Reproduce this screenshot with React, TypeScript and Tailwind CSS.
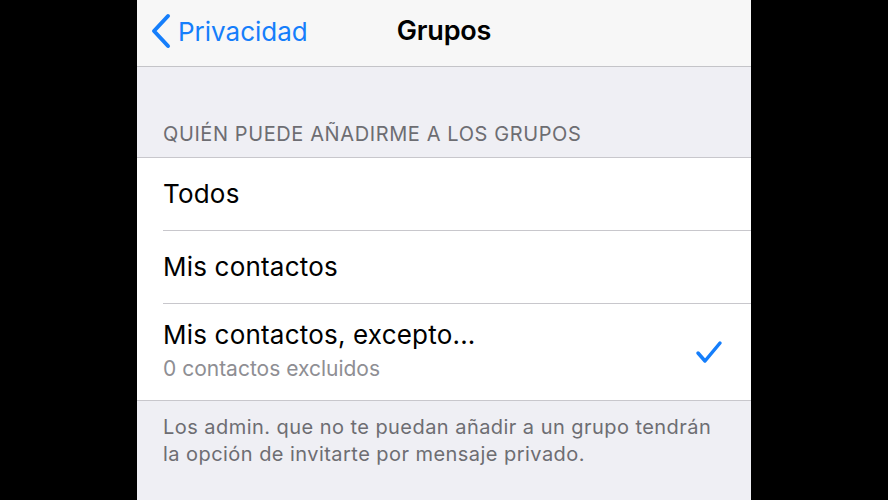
import React from "react";

export default function App() {
  const font = { fontFamily: "Inter, 'Noto Sans', sans-serif" };
  return (
    <div className="w-[888px] h-[500px] bg-black flex justify-center overflow-hidden" style={font}>
      <div className="w-[614px] h-[500px] bg-[#efeff4] flex flex-col">
        <div className="h-[67px] bg-[#f7f7f7] border-b border-[#c4c4c8] relative flex items-center justify-center pb-[4px] shrink-0">
          <div className="absolute left-[12px] top-0 bottom-[4px] flex items-center gap-[5px] text-[#157efb]">
            <svg width="24" height="36" viewBox="0 0 24 36" fill="none">
              <path d="M19 3 L5 18 L19 33" stroke="#157efb" strokeWidth="4" strokeLinecap="round" strokeLinejoin="round" />
            </svg>
            <span className="text-[26px]">Privacidad</span>
          </div>
          <span className="text-[27px] font-semibold text-black tracking-[-0.2px]">Grupos</span>
        </div>
        <div className="h-[90px] flex items-end pl-[26px] pb-[8px] shrink-0">
          <span className="text-[20px] text-[#6d6d72] tracking-[0.6px]">QUIÉN PUEDE AÑADIRME A LOS GRUPOS</span>
        </div>
        <div className="bg-white border-y border-[#c8c7cc]">
          <div className="h-[72px] flex items-center pl-[26px]">
            <span className="text-[26px] text-black tracking-[0.2px] -mt-[2px]">Todos</span>
          </div>
          <div className="ml-[26px] h-px bg-[#c8c7cc]" />
          <div className="h-[72px] flex items-center pl-[26px]">
            <span className="text-[26px] text-black tracking-[0.2px] -mt-[2px]">Mis contactos</span>
          </div>
          <div className="ml-[26px] h-px bg-[#c8c7cc]" />
          <div className="h-[96px] flex items-center pl-[26px] pr-[28px]">
            <div className="flex-1 flex flex-col gap-[6px] -mt-[3px]">
              <span className="text-[26px] text-black leading-[30px] tracking-[0.2px]">Mis contactos, excepto...</span>
              <span className="text-[21px] text-[#8e8e93] leading-[26px]">0 contactos excluidos</span>
            </div>
            <svg width="28" height="24" viewBox="0 0 28 24" fill="none">
              <path d="M3 13 L10 21 L25 3" stroke="#157efb" strokeWidth="3.5" strokeLinecap="round" strokeLinejoin="round" />
            </svg>
          </div>
        </div>
        <div className="pl-[26px] pr-[30px] pt-[13px] text-[20px] leading-[27px] tracking-[0.45px] text-[#6d6d72]">
          Los admin. que no te puedan añadir a un grupo tendrán la opción de invitarte por mensaje privado.
        </div>
      </div>
    </div>
  );
}
